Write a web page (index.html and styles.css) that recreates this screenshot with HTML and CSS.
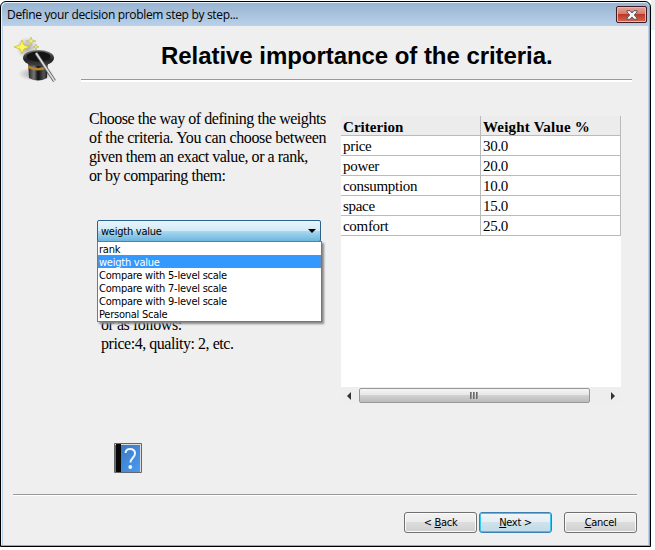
FILE: index.html
```html
<!DOCTYPE html>
<html lang="en">
<head>
<meta charset="utf-8">
<title>Define your decision problem step by step...</title>
<link rel="stylesheet" href="styles.css">
</head>
<body>
<div class="window">
  <div class="titlebar"><span class="caption">Define your decision problem step by step...</span>
    <div class="close"><svg width="12" height="10" viewBox="0 0 12 10"><path d="M1 .7h3L6 3 8 .7h3V2L8.3 5 11 8v1.300H8L6 7 4 9.300H1V8l2.700-3L1 2z" fill="#f4f4f4" stroke="#555b6b"/></svg></div>
  </div>
  <main class="client">
    <header class="header">
      <svg class="hat" width="42" height="48" viewBox="0 0 42 48">
        <defs>
          <linearGradient id="body"><stop offset="0" stop-color="#222"/><stop offset=".3" stop-color="#777"/><stop offset=".5" stop-color="#111"/><stop offset=".8" stop-color="#555"/><stop offset="1" stop-color="#111"/></linearGradient>
          <linearGradient id="brim" x2="0" y2="1"><stop offset="0" stop-color="#777"/><stop offset=".6" stop-color="#222"/><stop offset="1" stop-color="#444"/></linearGradient>
          <radialGradient id="shade"><stop offset="0" stop-color="#999"/><stop offset="1" stop-color="#999" stop-opacity="0"/></radialGradient>
        </defs>
        <ellipse cx="22" cy="38" rx="18" ry="7" fill="url(#shade)"/>
        <circle cx="13" cy="12" r="11" fill="url(#shade)" opacity=".8"/>
        <path d="M14 24l1 18q9 5 18 0l1-18z" fill="url(#body)"/>
        <path d="M14 29q10 6 20 0v3q-10 5-20 0z" fill="#b7812d"/>
        <ellipse cx="24.500" cy="22" rx="15.500" ry="8" fill="url(#brim)"/>
        <ellipse cx="24.500" cy="20.500" rx="12" ry="5" fill="#151515"/>
        <path d="M22 17L40.500 45" stroke="#555" stroke-width="3.200"/><path d="M22 17L40.500 45" stroke="#ddd" stroke-width="1.800"/>
        <path d="M8 4l2 5 6 2-6 2-2 5-2-5-6-2 6-2z" fill="#fff45c" stroke="#c4b928" stroke-width=".7"/>
        <path d="M17 1l1 3 4 1-4 1-1 4-1-4-4-1 4-1zM22 8l.7 2.300L25 11l-2.300.7L22 14l-.7-2.300L19 11l2.300-.7z" fill="#f3eb84" stroke="#bcb450" stroke-width=".6"/>
      </svg>
      <h1>Relative importance of the criteria.</h1>
    </header>
    <div class="content">
      <section class="options">
        <p class="intro"><span class="tight">Choose the way of defining the weights</span><br>of the criteria. You can choose between<br><span class="tight">given them an exact value, or a rank,</span><br><span class="tight">or by comparing them:</span></p>
        <div class="combo"><span>weigth value</span><i></i>
          <ul class="menu"><li>rank</li><li class="selected">weigth value</li><li>Compare with 5-level scale</li><li>Compare with 7-level scale</li><li>Compare with 9-level scale</li><li>Personal Scale</li></ul>
        </div>
        <p class="example">or as follows:<br>price:4, quality: 2, etc.</p>
        <svg class="book" width="28" height="30" viewBox="0 0 28 30">
          <defs><linearGradient id="cover" x2="1" y2="1"><stop stop-color="#3975bd"/><stop offset="1" stop-color="#4a9af0"/></linearGradient></defs>
          <path d="M.5.5h27v29H.5z" fill="#ddd" stroke="#666"/><path d="M1 2h25v27H1z" fill="url(#cover)"/><path d="M2 1h5v28H2z" fill="#080808"/><path d="M1.500 2v26" stroke="#3975bd"/>
          <path d="M11.500 10Q12 6 16 6q5 0 5 4.500c0 4-4.500 4.500-4.500 9" fill="none" stroke="#edf6ff" stroke-width="2"/><circle cx="16.300" cy="24" r="1.900" fill="#f3f8ff"/>
        </svg>
      </section>
      <section class="panel">
        <table><tr><th>Criterion</th><th>Weight Value %</th></tr><tr><td>price</td><td>30.0</td></tr><tr><td>power</td><td>20.0</td></tr><tr><td>consumption</td><td>10.0</td></tr><tr><td>space</td><td>15.0</td></tr><tr><td>comfort</td><td>25.0</td></tr></table>
        <div class="scroll"><i class="left"></i><div class="thumb"><b></b><b></b><b></b></div><i class="right"></i></div>
      </section>
    </div>
    <footer><button><span>&lt; <u>B</u>ack</span></button><button class="primary"><span><u>N</u>ext &gt;</span></button><button class="cancel"><span><u>C</u>ancel</span></button></footer>
  </main>
</div>
</body>
</html>
```
FILE: styles.css
```css
* { box-sizing: border-box; }
body { margin: 0; background: linear-gradient(#eee, #eee) right top / 4px 30px no-repeat #fff; overflow: hidden; font: 11px "DejaVu Sans Condensed", "DejaVu Sans", sans-serif; color: #000; letter-spacing: -.24px; }
.window { width: 651px; height: 546px; margin-top: 1px; border: 1px solid #000; border-radius: 6px 6px 0 0; background: #b9d1ea; padding: 1px; box-shadow: inset -1px -1px #35cdf2, inset 1px 1px #e5f3fc; }
.titlebar { height: 23px; padding: 0 2px 0 5px; display: flex; justify-content: space-between; background: linear-gradient(#99b4d1, #b9d1ea); border-radius: 5px 5px 0 0; }
.caption { font: 12px/23px "Open Sans", sans-serif; white-space: nowrap; letter-spacing: -.33px; }
.close { width: 31px; height: 17px; margin-top: 3px; border: 1px solid #431b25; border-radius: 2px; display: flex; align-items: center; justify-content: center; background: linear-gradient(#e6a596, #d5796a 48%, #bd3824 50%, #d36b53); box-shadow: inset 0 0 0 1px #edb6a9; }
.client { height: 519px; margin: 0 1px; background: #efefef; }
.header { height: 56px; position: relative; margin: 0 16px 0 78px; border-bottom: 2px solid #fff; box-shadow: inset 0 -1px #999; }
.hat { position: absolute; left: -67px; top: 10px; }
h1 { margin: 0; padding: 14px 0 0 80px; font: bold 24px/32px "Liberation Sans", sans-serif; white-space: nowrap; letter-spacing: -.05px; }
.content { height: 412px; display: flex; padding-top: 34px; }
.options { width: 338px; padding-left: 86px; }
p { margin: 0; font: 16px/19px "Liberation Serif", serif; white-space: nowrap; letter-spacing: -.37px; }
.tight { letter-spacing: -.46px; }
.intro { margin-top: -7px; height: 111px; }
.combo { position: relative; width: 224px; height: 22px; margin-left: 8px; border: 1px solid #2c628b; border-radius: 2px; display: flex; align-items: center; justify-content: space-between; padding: 0 4px 0 3px; background: linear-gradient(#e8f5fc, #d2ebf8 48%, #aad9f1 50%, #6eb6df); }
.combo > i { border: 4px solid transparent; border-top-color: #000; border-bottom: 0; }
.menu { position: absolute; left: -1px; top: 20px; width: 225px; margin: 0; padding: 0; border: 1px solid #777; background: #fff; list-style: none; box-shadow: 2px 2px 2px #888; }
.menu li { height: 13px; line-height: 16px; padding-left: 1px; }
.menu .selected { background: #3399ff; color: #fff; box-shadow: inset 0 0 0 1px #5c91c8; }
.menu li:last-child { height: 14px; }
.example { margin: 73px 0 0 12px; letter-spacing: -.46px; }
.book { display: block; margin: 90px 0 0 25px; }
.panel { width: 280px; height: 288px; background: #fff; display: flex; flex-direction: column; justify-content: space-between; }
table { width: 280px; border-collapse: separate; border-spacing: 0; table-layout: fixed; font: 15px/17px "Liberation Serif", serif; letter-spacing: -.3px; }
th, td { height: 20px; padding: 2px 0 0 2px; border: 0 solid #bbb; border-width: 0 1px 1px 0; text-align: left; }
th { background: #ececec; padding-top: 3px; line-height: 16px; letter-spacing: .2px; }
th:first-child { letter-spacing: .05px; }
tr > :first-child { width: 140px; }
.scroll { height: 17px; background: #eee; display: flex; align-items: center; justify-content: space-between; padding: 0 6px; }
.thumb { width: 231px; height: 15px; margin-right: 14px; display: flex; gap: 1px; align-items: center; justify-content: center; border: 1px solid #979797; border-radius: 2px; background: linear-gradient(#f5f5f5, #e6e6e6 48%, #d1d1d1 50%, #bbb); }
.thumb b { width: 2px; height: 7px; background: linear-gradient(90deg, #555, #aaa); }
.left, .right { border: 4px solid transparent; }
.left { border-left: 0; border-right-color: #333; }
.right { border-right: 0; border-left-color: #333; }
footer { height: 51px; margin: 0 11px 0 10px; display: flex; justify-content: flex-end; gap: 2px; padding-top: 17px; border-top: 1px solid #999; box-shadow: inset 0 1px #fff; }
button { width: 73px; height: 21px; padding: 1px 0 0; border: 1px solid #707070; border-radius: 3px; font: inherit; line-height: 18px; letter-spacing: -.3px; color: #000; background: linear-gradient(#f2f2f2, #ebebeb 48%, #ddd 50%, #cfcfcf); box-shadow: inset 0 0 0 1px #fafafa; }
.primary { border-color: #3c7fb1; box-shadow: inset 0 0 0 1px #36c8f5; background: linear-gradient(#f0f5f8, #e5eef3 48%, #d0e2eb 50%, #bfdbe8); }
.cancel { margin-left: 10px; }
u { text-underline-offset: 1px; }
```
